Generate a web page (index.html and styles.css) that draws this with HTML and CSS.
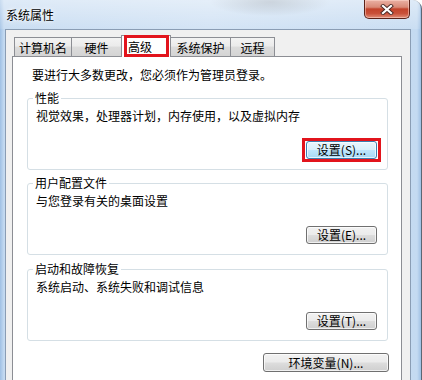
FILE: index.html
```html
<!DOCTYPE html>
<html lang="zh-CN">
<head>
<meta charset="utf-8">
<title>系统属性</title>
<link rel="stylesheet" href="styles.css">
</head>
<body>
<div class="window">
  <div class="titlebar">
    <span class="title">系统属性</span>
    <div class="close">
      <svg width="14" height="11" viewBox="0 0 14 11">
        <path d="M3 2 L11 9 M11 2 L3 9" stroke="#4a2a26" stroke-width="4" stroke-linecap="square"/>
        <path d="M3 2 L11 9 M11 2 L3 9" stroke="#ffffff" stroke-width="2.2" stroke-linecap="square"/>
      </svg>
    </div>
  </div>
  <div class="client">
    <div class="tabs">
      <div class="tab t1">计算机名</div>
      <div class="tab t2">硬件</div>
      <div class="tab t3 selected">高级</div>
      <div class="tab t4">系统保护</div>
      <div class="tab t5">远程</div>
    </div>
    <div class="panel">
      <p class="intro">要进行大多数更改，您必须作为管理员登录。</p>
      <fieldset class="group g1">
        <legend>性能</legend>
        <p class="desc">视觉效果，处理器计划，内存使用，以及虚拟内存</p>
        <div class="btnrow"><span class="mark"><button class="btn hot">设置(S)...</button></span></div>
      </fieldset>
      <fieldset class="group g2">
        <legend>用户配置文件</legend>
        <p class="desc">与您登录有关的桌面设置</p>
        <div class="btnrow"><button class="btn">设置(E)...</button></div>
      </fieldset>
      <fieldset class="group g3">
        <legend>启动和故障恢复</legend>
        <p class="desc">系统启动、系统失败和调试信息</p>
        <div class="btnrow"><button class="btn">设置(T)...</button></div>
      </fieldset>
      <div class="btnrow bottom"><button class="btn wide">环境变量(N)...</button></div>
    </div>
  </div>
</div>
</body>
</html>
```

FILE: styles.css
```css
* { box-sizing: border-box; }
html, body {
  margin: 0;
  padding: 0;
  width: 422px;
  height: 380px;
  overflow: hidden;
  font-family: "Noto Sans CJK SC", "Liberation Sans", sans-serif;
  font-size: 12px;
  color: #000;
}
.window {
  width: 422px;
  height: 380px;
  display: flex;
  flex-direction: column;
  padding: 0 10px 0 5px;
  background:
    radial-gradient(ellipse 60px 14px at 270px 2px, rgba(120,130,140,0.45), rgba(120,130,140,0) 100%),
    linear-gradient(to right, #9fc0e4 0, #c4daf1 4px, #cfe1f4 50%, #c4daf1 calc(100% - 4px), #9fc0e4 100%);
  border-right: 1px solid #5b6674;
  border-top-right-radius: 9px;
}
.titlebar {
  height: 29px;
  flex: none;
  display: flex;
  align-items: flex-start;
  justify-content: space-between;
  background: linear-gradient(to bottom, rgba(255,255,255,0.45), rgba(255,255,255,0.1));
  margin: 0 -9px 0 -5px;
  padding: 0 10px 0 6px;
}
.title {
  line-height: 16px;
  margin-top: 7px;
  font-size: 12px;
  text-shadow: 0 0 6px #fff, 0 0 3px #fff;
}
.close {
  width: 46px;
  height: 19px;
  display: flex;
  align-items: center;
  justify-content: center;
  border: 1px solid #5a2219;
  border-top: none;
  border-radius: 0 0 5px 5px;
  background: linear-gradient(to bottom, #eab1a4 0%, #d98a77 40%, #c2432b 50%, #c9513a 75%, #e08e78 100%);
  box-shadow: inset 0 0 0 1px rgba(255,220,210,0.5);
}
.close svg { display: block; }
.client {
  flex: 1;
  display: flex;
  flex-direction: column;
  background: #f0f0f0;
  border: 1px solid #8a9db4;
  border-bottom: none;
  padding: 5px 8px 0 6px;
}
.tabs {
  display: flex;
  align-items: flex-end;
  height: 21px;
  margin-left: 2px;
  flex: none;
}
.tab {
  height: 19px;
  border: 1px solid #8c8e94;
  border-bottom: none;
  margin-right: -1px;
  display: flex;
  align-items: center;
  justify-content: center;
  line-height: 16px;
  padding-top: 2px;
  background: linear-gradient(to bottom, #f3f3f3 0%, #ebebeb 45%, #dcdcdc 50%, #d4d4d4 100%);
}
.t1 { width: 58px; }
.t2 { width: 51px; }
.t3 { width: 50px; }
.t4 { width: 61px; }
.t5 { width: 45px; }
.tab.selected {
  height: 22px;
  margin-bottom: -1px;
  background: #fff;
  position: relative;
  z-index: 1;
  padding-top: 0;
  justify-content: flex-start;
  padding-left: 6px;
}
.tab.selected::after {
  content: "";
  position: absolute;
  top: -1px;
  left: 2px;
  right: 1px;
  bottom: 0;
  border: 3px solid #e2141c;
}
.panel {
  flex: 1;
  background: #fff;
  border: 1px solid #8c8e94;
  border-bottom: none;
  padding: 10px 13px 0 14px;
}
.intro {
  margin: 0 0 0 5px;
  line-height: 16px;
}
.group {
  margin: 7px 0 0 0;
  border: 1px solid #d5dfe5;
  border-radius: 3px;
  padding: 2px 10px 10px 8px;
  min-width: 0;
}
.g2 { margin-top: 5px; }
.g3 { margin-top: 6px; }
.group legend {
  padding: 0 2px;
  margin-left: -3px;
  line-height: 16px;
}
.desc {
  margin: 0;
  line-height: 16px;
}
.btnrow {
  display: flex;
  justify-content: flex-end;
  margin-top: 17px;
}
.mark {
  display: flex;
  border: 3px solid #e2141c;
  padding: 0 1px;
  margin: -3px -4px -3px 0;
}
.btn {
  font-family: "Noto Sans CJK SC", "Liberation Sans", sans-serif;
  font-size: 12px;
  color: #000;
  height: 18px;
  width: 71px;
  padding: 0;
  line-height: 16px;
  border: 1px solid #707070;
  border-radius: 3px;
  background: linear-gradient(to bottom, #f2f2f2 0%, #ebebeb 48%, #dddddd 52%, #cfcfcf 100%);
  box-shadow: inset 0 0 0 1px rgba(255,255,255,0.7);
}
.btn.hot {
  border-color: #3c7fb1;
  background: linear-gradient(to bottom, #eaf6fd 0%, #d9f0fc 48%, #bee6fd 52%, #a7d9f5 100%);
}
.btnrow.bottom {
  margin-top: 12px;
}
.btn.wide {
  width: 126px;
  height: 19px;
  margin-right: -1px;
}
```
